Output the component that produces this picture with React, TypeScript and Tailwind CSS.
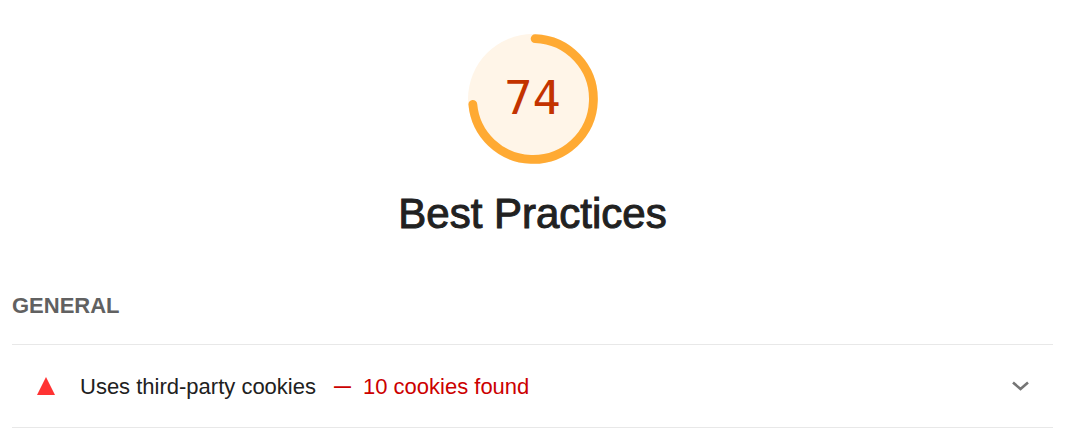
import React from "react";

function ScoreGauge({ score }: { score: number }) {
  return (
    <div className="grid size-[130px] place-items-center">
      <svg viewBox="0 0 130 130" className="col-start-1 row-start-1 size-full" aria-hidden="true">
        <circle cx="65" cy="65" r="65" fill="#fff5e8" />
        <circle
          cx="65"
          cy="65"
          r="60.4"
          fill="none"
          stroke="#ffaa33"
          strokeWidth="8.8"
          strokeLinecap="round"
          pathLength={100}
          strokeDasharray={`${score - 1} 100`}
          transform="rotate(-88 65 65)"
        />
      </svg>
      <span className="col-start-1 row-start-1 pb-1 font-['DejaVu_Sans_Mono',monospace] text-[47px] leading-none text-[#c33300]">
        {score}
      </span>
    </div>
  );
}

function AuditRow({ title, detail }: { title: string; detail: string }) {
  return (
    <button
      type="button"
      className="flex w-full items-center border-y border-[#e8e8e8] px-6 pt-[25px] pb-[23px] text-left text-[22px] leading-[34px] text-[#212121]"
    >
      <svg viewBox="0 0 20 20" className="mr-6 size-5 shrink-0" aria-hidden="true">
        <path d="M10 0 19 18H1Z" fill="#ff3333" />
      </svg>
      <span>{title}</span>
      <span className="ml-[18px] flex items-center gap-3 text-[#c00]">
        <span className="text-[17px] font-bold">—</span>
        <span>{detail}</span>
      </span>
      <svg viewBox="0 0 18 12" className="ml-auto h-3 w-[18px] shrink-0" aria-hidden="true">
        <path d="M2 1.5 9.5 8 17 1.5" fill="none" stroke="#757575" strokeWidth="2.6" />
      </svg>
    </button>
  );
}

export default function App() {
  return (
    <main className="bg-white pt-[34px] pr-[19px] pb-2 pl-3 font-['Liberation_Sans',Arial,sans-serif]">
      <header className="flex flex-col items-center">
        <ScoreGauge score={74} />
        <h1 className="mt-6 text-[42px] leading-[52px] text-[#212121] [-webkit-text-stroke:1px]">Best Practices</h1>
      </header>
      <section className="mt-[50px]">
        <h2 className="mb-[22px] text-[22px] leading-8 font-bold text-[#616161]">GENERAL</h2>
        <AuditRow title="Uses third-party cookies" detail="10 cookies found" />
      </section>
    </main>
  );
}
